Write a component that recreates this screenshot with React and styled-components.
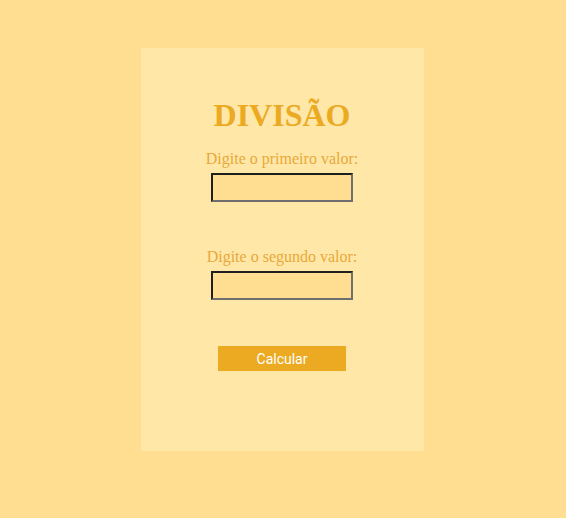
import React from "react";
import styled, { createGlobalStyle } from "styled-components";

const GlobalStyle = createGlobalStyle`
  html, body {
    margin: 0;
    padding: 0;
    background-color: #ffde91;
  }
  body {
    font-family: "Liberation Serif", "Times New Roman", serif;
  }
`;

const Page = styled.div`
  width: 566px;
  height: 518px;
  display: flex;
  justify-content: center;
  padding-top: 48px;
  box-sizing: border-box;
`;

const Card = styled.div`
  width: 283px;
  height: 403px;
  margin-left: -1px;
  background-color: #ffe7a8;
  display: flex;
  flex-direction: column;
  align-items: center;
  padding: 49px 1px 0 0;
  box-sizing: border-box;
`;

const Title = styled.h1`
  margin: 0 0 16px;
  font-size: 32px;
  font-weight: bold;
  color: #ebaa22;
  line-height: 37px;
`;

const Field = styled.div`
  display: flex;
  flex-direction: column;
  align-items: center;
  margin-bottom: ${(props) => props.gap}px;
`;

const Label = styled.label`
  font-size: 16px;
  color: #e8a93a;
  line-height: 18px;
  margin-bottom: 5px;
`;

const Input = styled.input`
  width: 142px;
  height: 29px;
  box-sizing: border-box;
  background-color: #ffde91;
  border-width: 2px;
  border-style: solid;
  border-color: #1f1f1f #6f6f6f #6f6f6f #1f1f1f;
  padding: 0 4px;
  outline: none;
`;

const Button = styled.button`
  width: 128px;
  height: 25px;
  border: none;
  background-color: #ebaa22;
  color: #fff;
  font-family: Roboto, "Liberation Sans", sans-serif;
  font-size: 14px;
  padding: 0;
  cursor: pointer;
`;

export default function App() {
  return (
    <>
      <GlobalStyle />
      <Page>
        <Card>
          <Title>DIVISÃO</Title>
          <Field gap={46}>
            <Label>Digite o primeiro valor:</Label>
            <Input type="text" />
          </Field>
          <Field gap={46}>
            <Label>Digite o segundo valor:</Label>
            <Input type="text" />
          </Field>
          <Button>Calcular</Button>
        </Card>
      </Page>
    </>
  );
}
